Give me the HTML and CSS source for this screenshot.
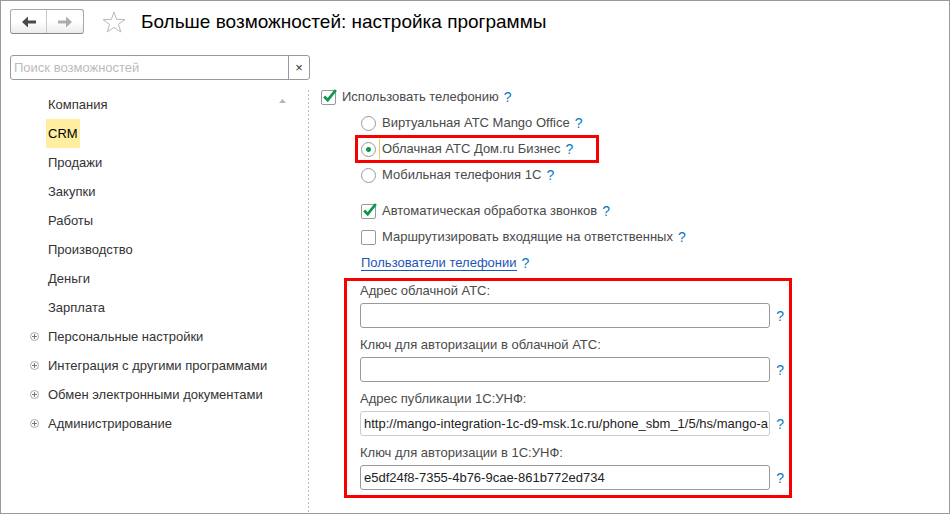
FILE: index.html
```html
<!DOCTYPE html>
<html lang="ru">
<head>
    <meta charset="UTF-8">
    <meta name="viewport" content="width=device-width, initial-scale=1.0">
    <title>Больше возможностей: настройка программы</title>
    <link rel="stylesheet" href="styles.css">
</head>
<body>
    <header class="header">
        <div class="history">
            <button type="button">
                <svg width="14" height="12" viewBox="0 0 14 12"><path d="M0 6L6 0.5V4.5H14V7.5H6V11.5Z" fill="#4a4a4a"/></svg>
            </button>
            <button type="button">
                <svg width="14" height="12" viewBox="0 0 14 12"><path d="M14 6L8 0.5V4.5H0V7.5H8V11.5Z" fill="#adadad"/></svg>
            </button>
        </div>
        <button class="star" type="button">
            <svg width="24" height="22" viewBox="0 0 24 22"><path d="M12 1L14.6 8.3L23 8.5L16.4 13.3L18.8 21L12 16.4L5.2 21L7.6 13.3L1 8.5L9.4 8.3Z" fill="none" stroke="#b4b9be"/></svg>
        </button>
        <h1>Больше возможностей: настройка программы</h1>
    </header>

    <form class="search">
        <input type="text" id="search" placeholder="Поиск возможностей">
        <button type="button">×</button>
    </form>

    <main class="main">
        <nav class="sidebar">
            <ul class="sections">
                <li><a href="#">Компания</a></li>
                <li><a class="active" href="#">CRM</a></li>
                <li><a href="#">Продажи</a></li>
                <li><a href="#">Закупки</a></li>
                <li><a href="#">Работы</a></li>
                <li><a href="#">Производство</a></li>
                <li><a href="#">Деньги</a></li>
                <li><a href="#">Зарплата</a></li>
                <li class="group">
                    <svg width="9" height="9" viewBox="0 0 9 9"><circle cx="4.5" cy="4.5" r="4" fill="none" stroke="#a8a8a8"/><path d="M2 4.5H7M4.5 2V7" stroke="#777"/></svg>
                    <a href="#">Персональные настройки</a>
                </li>
                <li class="group">
                    <svg width="9" height="9" viewBox="0 0 9 9"><circle cx="4.5" cy="4.5" r="4" fill="none" stroke="#a8a8a8"/><path d="M2 4.5H7M4.5 2V7" stroke="#777"/></svg>
                    <a href="#">Интеграция с другими программами</a>
                </li>
                <li class="group">
                    <svg width="9" height="9" viewBox="0 0 9 9"><circle cx="4.5" cy="4.5" r="4" fill="none" stroke="#a8a8a8"/><path d="M2 4.5H7M4.5 2V7" stroke="#777"/></svg>
                    <a href="#">Обмен электронными документами</a>
                </li>
                <li class="group">
                    <svg width="9" height="9" viewBox="0 0 9 9"><circle cx="4.5" cy="4.5" r="4" fill="none" stroke="#a8a8a8"/><path d="M2 4.5H7M4.5 2V7" stroke="#777"/></svg>
                    <a href="#">Администрирование</a>
                </li>
            </ul>
            <svg class="scroll-up" width="7" height="4" viewBox="0 0 7 4"><path d="M0 4L3.5 0L7 4Z" fill="#b5b5b5"/></svg>
        </nav>

        <form class="settings">
            <div class="row">
                <span class="check">
                    <input type="checkbox" id="telephony" checked>
                    <svg width="15" height="15" viewBox="0 0 15 15"><path d="M3.2 6.5L6.7 10.2L14.8 0" fill="none" stroke="#0a9a4c" stroke-width="2.8"/></svg>
                </span>
                <label for="telephony">Использовать телефонию</label>
                <button class="help" type="button">?</button>
            </div>

            <div class="options">
                <div class="row">
                    <input type="radio" name="ats" id="mango">
                    <label for="mango">Виртуальная АТС Mango Office</label>
                    <button class="help" type="button">?</button>
                </div>
                <div class="row marked">
                    <input type="radio" name="ats" id="domru" checked>
                    <label for="domru">Облачная АТС Дом.ru Бизнес</label>
                    <button class="help" type="button">?</button>
                </div>
                <div class="row">
                    <input type="radio" name="ats" id="mobile">
                    <label for="mobile">Мобильная телефония 1С</label>
                    <button class="help" type="button">?</button>
                </div>
            </div>

            <div class="options calls">
                <div class="row">
                    <span class="check">
                        <input type="checkbox" id="auto" checked>
                        <svg width="15" height="15" viewBox="0 0 15 15"><path d="M3.2 6.5L6.7 10.2L14.8 0" fill="none" stroke="#0a9a4c" stroke-width="2.8"/></svg>
                    </span>
                    <label for="auto">Автоматическая обработка звонков</label>
                    <button class="help" type="button">?</button>
                </div>
                <div class="row">
                    <span class="check">
                        <input type="checkbox" id="route">
                        <svg width="15" height="15" viewBox="0 0 15 15"><path d="M3.2 6.5L6.7 10.2L14.8 0" fill="none" stroke="#0a9a4c" stroke-width="2.8"/></svg>
                    </span>
                    <label for="route">Маршрутизировать входящие на ответственных</label>
                    <button class="help" type="button">?</button>
                </div>
                <div class="row">
                    <a class="users" href="#">Пользователи телефонии</a>
                    <button class="help" type="button">?</button>
                </div>
            </div>

            <div class="fields">
                <div class="field">
                    <label for="cloud-url">Адрес облачной АТС:</label>
                    <input type="text" id="cloud-url">
                    <button class="help" type="button">?</button>
                </div>
                <div class="field">
                    <label for="cloud-key">Ключ для авторизации в облачной АТС:</label>
                    <input type="text" id="cloud-key">
                    <button class="help" type="button">?</button>
                </div>
                <div class="field">
                    <label for="unf-url">Адрес публикации 1С:УНФ:</label>
                    <input type="text" id="unf-url" value="http://mango-integration-1c-d9-msk.1c.ru/phone_sbm_1/5/hs/mango-a" readonly>
                    <button class="help" type="button">?</button>
                </div>
                <div class="field">
                    <label for="unf-key">Ключ для авторизации в 1С:УНФ:</label>
                    <input type="text" id="unf-key" value="e5df24f8-7355-4b76-9cae-861b772ed734">
                    <button class="help" type="button">?</button>
                </div>
            </div>
        </form>
    </main>
</body>
</html>
```
FILE: styles.css
```css
* {
    box-sizing: border-box;
}

body {
    display: flex;
    flex-direction: column;
    min-height: 100vh;
    margin: 0;
    border: 1px solid #999;
    background-color: #fff;
    color: #333;
    font-family: "Liberation Sans", Arial, sans-serif;
    font-size: 13px;
    line-height: 20px;
}

input, button {
    margin: 0;
    padding: 0;
    font: inherit;
    color: inherit;
}

button {
    border: none;
    background: none;
    cursor: pointer;
}

svg {
    display: block;
    overflow: visible;
}

.header {
    display: flex;
    align-items: center;
    padding: 8px 9px 0;
}

.history {
    display: flex;
    height: 25px;
    border: 1px solid #a6a6a6;
    border-bottom-color: #888;
    border-radius: 3px;
    background: linear-gradient(#fff 50%, #ececec);
}

.history button {
    display: flex;
    align-items: center;
    justify-content: center;
    width: 36px;
}

.history button:first-child {
    border-right: 1px solid #c8c8c8;
}

.star {
    margin: 0 15px 0 18px;
}

h1 {
    margin: 0;
    color: #000;
    font-size: 19px;
    font-weight: normal;
}

.search {
    display: flex;
    width: 300px;
    height: 25px;
    margin: 21px 0 7px 9px;
    border: 1px solid #999;
    border-radius: 3px;
}

.search input {
    flex: 1;
    min-width: 0;
    padding: 0 3px;
    border: none;
    outline: none;
    background: none;
}

.search input::placeholder {
    color: #bbb;
}

.search button {
    width: 21px;
    border-left: 1px solid #999;
    line-height: 22px;
}

.main {
    display: flex;
    flex: 1;
}

.sidebar {
    display: flex;
    justify-content: space-between;
    width: 308px;
    margin-top: 3px;
    padding-right: 23px;
    background: repeating-linear-gradient(#bbb 0 2px, #fff 2px 4px) right / 1px 100% no-repeat;
}

.sections {
    margin: 0;
    padding: 0 0 0 29px;
    list-style: none;
}

.sections li {
    display: flex;
    align-items: center;
    height: 29px;
    padding-left: 16px;
}

.sections .group {
    padding-left: 0;
    gap: 7px;
}

.sections a {
    padding: 0 2px;
    color: #333;
    line-height: 29px;
    text-decoration: none;
}

.sections .active {
    background-color: #ffeea0;
    color: #000;
}

.scroll-up {
    margin-top: 9px;
}

.settings {
    flex: 1;
    padding-left: 12px;
    color: #4a4a4a;
}

.row {
    display: flex;
    align-items: center;
    height: 20px;
    margin-bottom: 6px;
}

.row label {
    padding-left: 6px;
}

.options {
    padding-left: 40px;
}

.calls {
    padding-top: 10px;
}

.help {
    margin-left: 6px;
    color: #0a78c2;
    font-size: 14px;
}

.row .help {
    margin-left: 5px;
}

.check {
    display: grid;
}

.check input, .check svg {
    grid-area: 1 / 1;
}

.check svg {
    visibility: hidden;
    pointer-events: none;
}

.check input:checked + svg {
    visibility: visible;
}

input[type="checkbox"], input[type="radio"] {
    width: 15px;
    height: 15px;
    border: 1px solid #999;
    border-radius: 2px;
    background-color: #fff;
    appearance: none;
}

input[type="radio"] {
    border-radius: 50%;
}

input[type="radio"]:checked {
    background-image: radial-gradient(circle, #0a9a4c 2px, transparent 3px);
}

.marked {
    width: fit-content;
    margin-left: -2px;
    padding: 0 22px 0 2px;
    outline: 3px solid #f80000;
    outline-offset: 1px;
}

.marked label {
    margin-left: 3px;
    padding-left: 2px;
    border-left: 1px solid #f0c850;
}

.users {
    border-bottom: 1px solid #1a56b8;
    color: #1a56b8;
    line-height: 15px;
    text-decoration: none;
}

.fields {
    display: grid;
    gap: 7px;
    max-width: 448px;
    margin: -1px 0 14px 23px;
    padding: 0 5px 5px 13px;
    border: 3px solid #f80000;
}

.field {
    display: grid;
    grid-template-columns: 1fr auto;
    gap: 2px 0;
}

.field label {
    grid-column: 1 / 3;
}

.field input {
    min-width: 0;
    height: 25px;
    padding: 0 0 0 3px;
    border: 1px solid #999;
    border-radius: 3px;
    background-color: #fff;
    color: #222;
}

.field input:read-only {
    border-color: #ccc;
}
```
